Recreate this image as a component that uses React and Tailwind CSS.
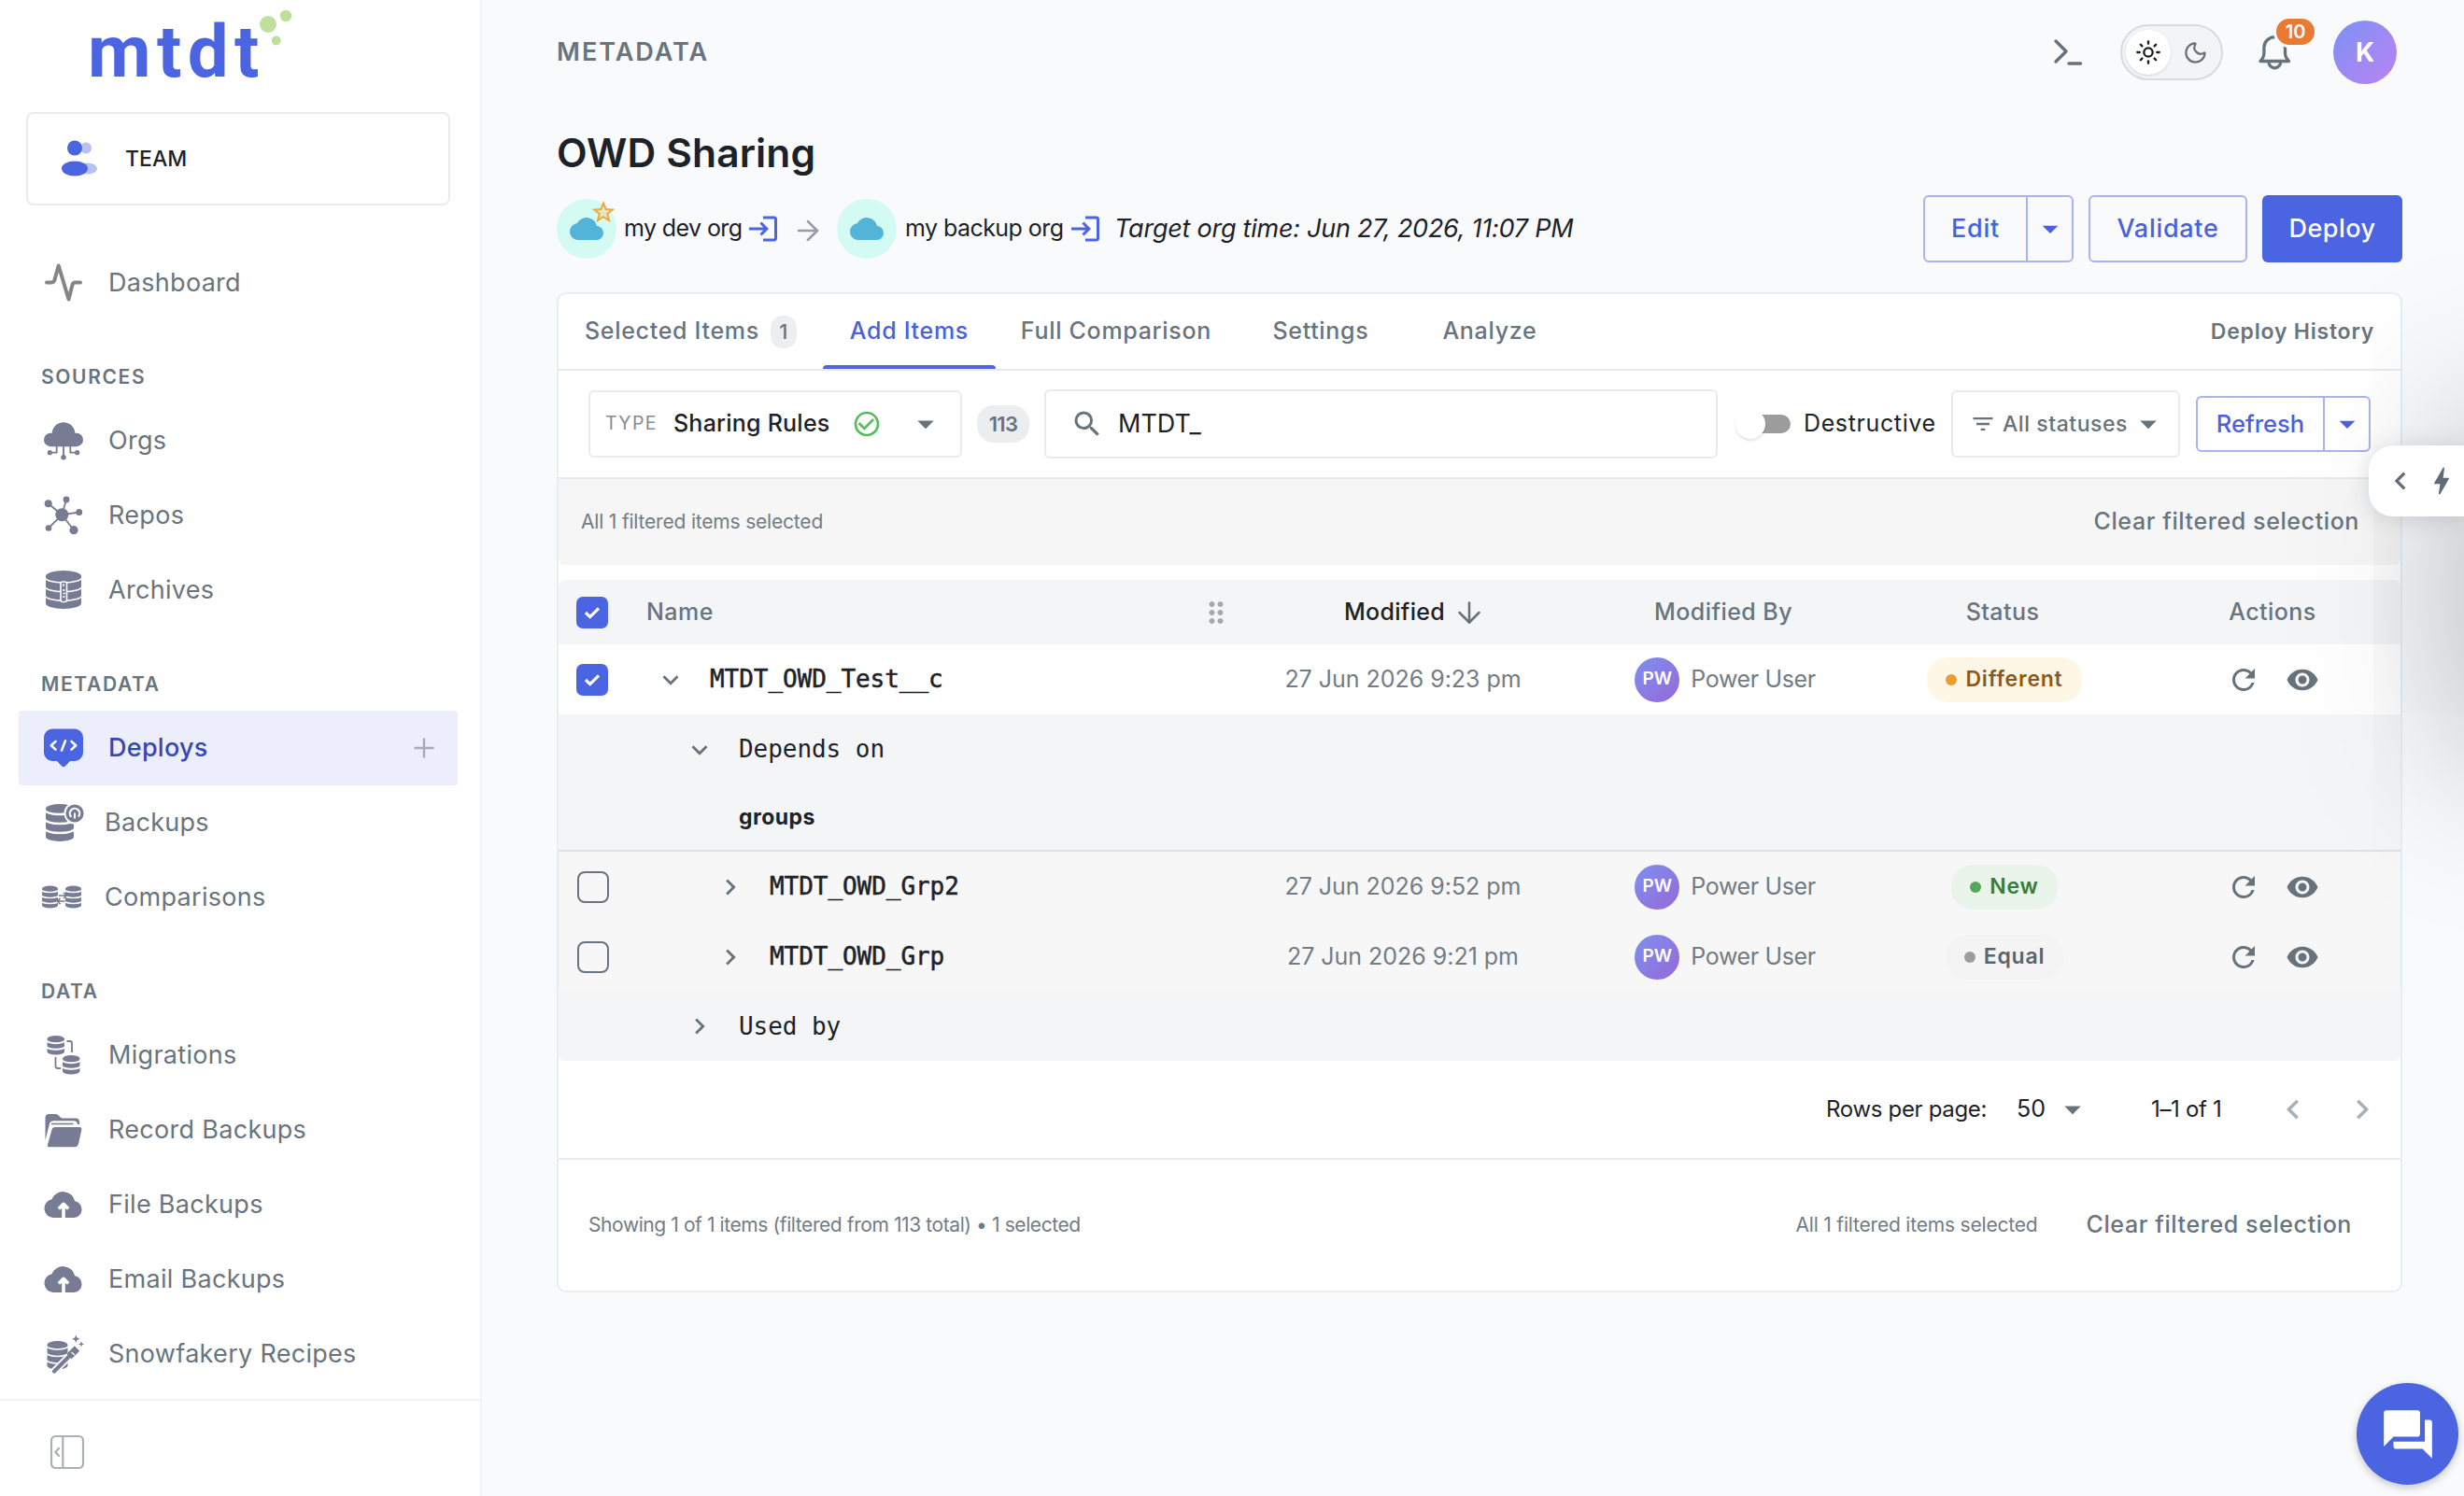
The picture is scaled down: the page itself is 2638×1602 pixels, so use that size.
import { useState } from "react";
import clsx from "clsx";
import { ArrowDown, ArrowRight, Moon, Sun } from "lucide-react";
import {
  MdArrowDropDown, MdBolt, MdCheckCircleOutline, MdChevronLeft, MdChevronRight, MdCloud,
  MdDragIndicator, MdExpandMore, MdFilterList, MdForum, MdLogin, MdRefresh, MdSearch, MdVisibility,
} from "react-icons/md";

const INK = "#777b93";

// stacked-disk cylinder, used by most of the data icons
function Disks({ x, y, w, h, bands = 3, ry = w / 6, gap = 2.2 }) {
  const rx = w / 2;
  const step = (h - ry * 2) / bands;
  return (
    <g>
      <path
        d={`M${x} ${y + ry}a${rx} ${ry} 0 0 1 ${w} 0V${y + h - ry}a${rx} ${ry} 0 0 1 ${-w} 0Z`}
        fill={INK}
      />
      {Array.from({ length: bands }, (_, i) => (
        <path
          key={i}
          d={`M${x - 1} ${y + ry + i * step + 1}a${rx + 1} ${ry} 0 0 0 ${w + 2} 0`}
          fill="none"
          stroke="#fff"
          strokeWidth={gap}
        />
      ))}
    </g>
  );
}

const Glyph = ({ children }) => (
  <svg width="42" height="42" viewBox="0 0 42 42" fill="none" className="shrink-0 overflow-visible">{children}</svg>
);

const DashboardIcon = () => (
  <Glyph>
    <path d="M3 20.500h5c2 0 2.800-.8 3.400-2.600L15.700 2.500 26.500 38.500 30.500 23.100c.5-1.800 1.300-2.600 3.200-2.600H39" stroke="#858585" strokeWidth="4" strokeLinecap="round" strokeLinejoin="round" />
  </Glyph>
);

const OrgsIcon = () => (
  <Glyph>
    <circle cx="21" cy="13.500" r="12.300" fill={INK} />
    <rect x="0" y="12.700" width="42" height="14.500" rx="7.200" fill={INK} />
    <path d="M13.700 27v6.700H6.300M21 27v10M28.300 27v6.700h7.400" stroke={INK} strokeWidth="1.800" />
    <circle cx="6.300" cy="33.700" r="2.600" fill={INK} />
    <circle cx="21" cy="38.700" r="2.700" fill={INK} />
    <circle cx="35.700" cy="33.700" r="2.600" fill={INK} />
  </Glyph>
);

const ReposIcon = () => (
  <Glyph>
    <path d="M19.300 20.300 4.700 8.300M19.300 20.300 24 4M19.300 20.300l18.400-2.800M19.300 20.300 32 36.700M19.300 20.300 5 34.500" stroke={INK} strokeWidth="1.800" />
    <circle cx="19.300" cy="20.300" r="7" fill={INK} />
    <circle cx="4.700" cy="8.300" r="4" fill={INK} />
    <circle cx="24" cy="4" r="3.400" fill={INK} />
    <circle cx="37.700" cy="17.500" r="3.500" fill={INK} />
    <circle cx="32" cy="36.700" r="4.600" fill={INK} />
    <circle cx="5" cy="34.500" r="3.300" fill={INK} />
  </Glyph>
);

const ArchivesIcon = () => (
  <Glyph>
    <Disks x={2} y={0} w={38} h={41} ry={6} gap={1.600} />
    <rect x="18" y="12" width="6.500" height="21.500" rx="2" fill={INK} stroke="#fff" strokeWidth="1.600" />
    <path d="M21 14v3M20 21h2.500M20.500 24.500H23M20 28h2.500" stroke="#fff" strokeWidth="1.400" />
  </Glyph>
);

const DeploysIcon = () => (
  <Glyph>
    <path d="M9 .5h24a9 9 0 0 1 9 9V26a9 9 0 0 1-9 9h-5l-5 5.200a2.800 2.800 0 0 1-4 0L14 35H9a9 9 0 0 1-9-9V9.500a9 9 0 0 1 9-9Z" fill="#4b64e2" />
    <path d="m12.500 14-4.700 4.300 4.700 4.300M29.500 14l4.700 4.300-4.700 4.300M23 13.300l-4 10.200" stroke="#fff" strokeWidth="2.600" strokeLinecap="round" strokeLinejoin="round" />
  </Glyph>
);

const BackupsIcon = () => (
  <Glyph>
    <Disks x={2} y={1} w={30} h={40} ry={5} gap={2.400} />
    <circle cx="33" cy="11" r="11.500" fill="#fff" />
    <circle cx="33" cy="11" r="9.600" fill={INK} />
    <path d="M29.500 14.800a5.200 5.200 0 1 1 7.400-.4" stroke="#fff" strokeWidth="2.200" />
    <path d="M33 10.500v6" stroke="#fff" strokeWidth="2" />
  </Glyph>
);

const ComparisonsIcon = () => (
  <Glyph>
    <Disks x={0} y={8.500} w={17} h={24} ry={3} gap={1.600} />
    <Disks x={25} y={8.500} w={17} h={24} ry={3} gap={1.600} />
    <path d="M18 19h8m-3-3.200 3 3.200-3 3.200M24.500 25h-8m3-3.200-3 3.200 3 3.200" stroke={INK} strokeWidth="1.600" />
  </Glyph>
);

const MigrationsIcon = () => (
  <Glyph>
    <Disks x={3.500} y={0} w={18.500} h={20.500} bands={2} ry={3.600} gap={2} />
    <Disks x={20} y={21} w={18.500} h={20.500} bands={2} ry={3.600} gap={2} />
    <path d="M24.500 6h3.500q2 0 2 2v10M12.500 23v9.500q0 2.500 2.500 2.500h3" stroke={INK} strokeWidth="1.800" />
  </Glyph>
);

const FolderIcon = () => (
  <Glyph>
    <path d="M1.500 32V8a4 4 0 0 1 4-4h7.500c3 0 4 4.500 7 4.500h14a4 4 0 0 1 4 4V15h-2c0-2.500-1.500-3.800-4-3.800H10.500c-3 0-4 1.500-4.700 4Z" fill={INK} />
    <path d="M8 14.500h23.500" stroke={INK} strokeWidth="1.600" />
    <path d="M12 18h26c1.800 0 2.700 1.300 2.300 3l-3.300 15c-.5 2-1.800 3.200-3.800 3.200H5.500c-1.500 0-2-.8-1.500-2.500l4.500-16C9 19 10 18 12 18Z" fill={INK} />
  </Glyph>
);

const UploadIcon = () => (
  <Glyph>
    <path d="M32.500 35H10A10 10 0 0 1 8.500 15.200a13 13 0 0 1 24.700 2A9 9 0 0 1 32.500 35Z" fill={INK} />
    <path d="M21 35.500V22M15.800 25.500l5.200-5.200 5.200 5.200" stroke="#fff" strokeWidth="3.600" strokeLinejoin="round" />
  </Glyph>
);

const WandIcon = () => (
  <Glyph>
    <Disks x={3.500} y={7} w={22} h={30.500} ry={4} gap={1.600} />
    <path d="M11 39.500 36 14.500" stroke="#fff" strokeWidth="8" />
    <path d="M11 39.500 27 23.500" stroke={INK} strokeWidth="4.200" strokeLinecap="round" />
    <path d="M27 23.500 35.500 15" stroke={INK} strokeWidth="7.500" />
    <path d="m29.500 19 3.500 3" stroke="#fff" strokeWidth="1.300" />
    <path d="M34.300.5l1.200 3 3 1.200-3 1.200-1.200 3-1.200-3-3-1.200 3-1.200ZM40 7.300l.8 2.300 2.300.8-2.300.8-.8 2.300-.8-2.300-2.300-.8 2.300-.8Z" fill={INK} />
  </Glyph>
);

const NAV = [
  { items: [{ label: "Dashboard", icon: DashboardIcon }] },
  {
    title: "SOURCES",
    items: [
      { label: "Orgs", icon: OrgsIcon },
      { label: "Repos", icon: ReposIcon },
      { label: "Archives", icon: ArchivesIcon },
    ],
  },
  {
    title: "METADATA",
    items: [
      { label: "Deploys", icon: DeploysIcon, active: true },
      { label: "Backups", icon: BackupsIcon, box: "pl-[27px]", gap: "ml-[23px]" },
      { label: "Comparisons", icon: ComparisonsIcon, box: "pl-[25px]", gap: "ml-[25px]" },
    ],
  },
  {
    title: "DATA",
    items: [
      { label: "Migrations", icon: MigrationsIcon },
      { label: "Record Backups", icon: FolderIcon },
      { label: "File Backups", icon: UploadIcon },
      { label: "Email Backups", icon: UploadIcon },
      { label: "Snowfakery Recipes", icon: WandIcon },
    ],
  },
];

function Logo() {
  return (
    <div className="relative h-[120px] shrink-0 pl-[94px]">
      <span className="block pt-[11px] font-['Roboto'] text-[78px] leading-[90px] font-bold tracking-[0.082em] text-[#4b64e2]">mtdt</span>
      <svg className="absolute top-[8px] left-[276px]" width="40" height="44" viewBox="0 0 40 44" fill="#bfe09a">
        <circle cx="11" cy="18" r="9" />
        <circle cx="30" cy="9" r="6.200" />
        <circle cx="19.700" cy="35.500" r="5" />
      </svg>
    </div>
  );
}

function Sidebar() {
  return (
    <aside className="flex h-full w-[516px] shrink-0 flex-col border-r-2 border-[#f1f3f6] bg-white">
      <Logo />
      <div className="mr-[32px] ml-7 flex h-[100px] shrink-0 items-center rounded-lg border-2 border-[#ebebeb] pl-[36px]">
        <svg width="40" height="40" viewBox="0 0 40 40">
          <circle cx="26" cy="8.500" r="6" fill="#b7c1f4" />
          <ellipse cx="28" cy="30.500" rx="10" ry="6" fill="#b7c1f4" />
          <circle cx="14" cy="8.500" r="8" fill="#4b64e2" />
          <ellipse cx="14" cy="30.500" rx="14" ry="8" fill="#4b64e2" />
        </svg>
        <span className="ml-[28px] text-[23px] font-medium text-[#1d2228]">TEAM</span>
      </div>
      <nav className="mt-[43px] flex-1">
        {NAV.map((group, i) => (
          <div key={i}>
            {group.title && (
              <div className="flex h-[89px] items-center pt-[33px] pl-[44px] text-[21px] font-semibold tracking-[0.078em] text-[#69747e]">{group.title}</div>
            )}
            {group.items.map(({ label, icon: Icon, active, box = "pl-[27px]", gap = "ml-[27px]" }) => (
              <div
                key={label}
                className={clsx("mr-[24px] ml-[20px] flex h-[80px] items-center rounded pr-[22px]", box, active && "bg-[#eceefb]")}
              >
                <Icon />
                <span
                  className={clsx(
                    "flex-1 text-[27px]",
                    gap,
                    active ? "font-medium tracking-[0.01em] text-[#3647b4]" : "tracking-[0.011em] text-[#69747e]",
                  )}
                >
                  {label}
                </span>
                {active && (
                  <svg width="28" height="28" viewBox="0 0 28 28" stroke="#a6abb6" strokeWidth="2.400"><path d="M14 3.500v21M3.500 14h21" /></svg>
                )}
              </div>
            ))}
          </div>
        ))}
      </nav>
      <div className="flex h-[104px] shrink-0 items-center border-t-2 border-[#f0f1f3] pt-[7px] pl-[53px]">
        <svg width="38" height="38" viewBox="0 0 38 38" fill="none" stroke="#a9b0b7" strokeWidth="2.200" strokeLinecap="round">
          <rect x="2" y="2" width="34" height="34" rx="4.500" />
          <path d="M14.300 2v34M10 15l-3.600 4 3.600 4" />
        </svg>
      </div>
    </aside>
  );
}

function TopBar() {
  return (
    <header className="flex h-[112px] shrink-0 items-center pr-[6px]">
      <span className="flex-1 text-[27px] font-semibold tracking-[0.074em] text-[#69747e]">METADATA</span>
      <svg width="34" height="32" viewBox="0 0 34 32" fill="none" stroke="#66727c" strokeWidth="3.400" strokeLinecap="round" strokeLinejoin="round" className="mr-[39px]">
        <path d="m4 4 11 11L4 26M18 28h12.500" />
      </svg>
      <div className="flex h-[60px] w-[110px] items-center rounded-full border-2 border-[#d9dbdf] bg-[#f3f4f6] pl-1">
        <span className="flex size-[48px] items-center justify-center rounded-full bg-white shadow-sm">
          <Sun size={28} strokeWidth={2} className="text-[#1a1c1f]" />
        </span>
        <Moon size={27} strokeWidth={2} className="ml-[13px] text-[#66727c]" />
      </div>
      <div className="relative ml-[36px]">
        <svg width="40" height="40" viewBox="0 0 40 40" fill="none" stroke="#66727c" strokeWidth="3.300" strokeLinejoin="round">
          <path d="M4 29.500h30.500c-3-3-4-5-4-9V15a11.300 11.300 0 0 0-22.600 0v5.500c0 4-1 6-3.900 9Z" />
          <path d="M13 30.500a6.300 6.300 0 0 0 12.600 0" />
        </svg>
        <span className="absolute -top-[19px] left-[18px] flex h-[34px] w-[47px] items-center justify-center rounded-full border-3 border-[#f9fafc] bg-[#e97a32] text-[20px] font-semibold text-white">10</span>
      </div>
      <span className="ml-[42px] flex size-[68px] items-center justify-center rounded-full bg-linear-135 from-[#7a90f2] to-[#b983f4] text-[28px] font-bold text-white">K</span>
    </header>
  );
}

const OrgCloud = ({ starred }) => (
  <span className="relative flex size-[64px] shrink-0 items-center justify-center rounded-full bg-[#d3fbf3]">
    <MdCloud size={36} className="text-[#52b4d6]" />
    {starred && (
      <svg className="absolute top-[2px] left-[38px]" width="24" height="24" viewBox="0 0 24 24" fill="#e3e6c0" stroke="#f0a93e" strokeWidth="2">
        <path d="M12 2.500l2.700 6.600 7 .5-5.400 4.500 1.700 6.900-6-3.800-6 3.800 1.700-6.900-5.400-4.500 7-.5Z" />
      </svg>
    )}
  </span>
);

function SplitButton({ label, className, caret }) {
  return (
    <div className={clsx("flex items-stretch rounded-md border-2 border-[#a9b3f0] font-medium text-[#4b60dd]", className)}>
      <span className="flex flex-1 items-center justify-center">{label}</span>
      <span className={clsx("flex items-center justify-center border-l-2 border-[#a9b3f0]", caret)}>
        <MdArrowDropDown size={40} className="-mx-4" />
      </span>
    </div>
  );
}

function PageHeading() {
  return (
    <>
      <h1 className="flex h-[97px] items-center pt-[6px] text-[42.500px] font-semibold tracking-[0.003em] text-[#1d2228]">OWD Sharing</h1>
      <div className="flex h-[72px] items-center">
        <OrgCloud starred />
        <span className="ml-2 w-[131px] text-[25px] tracking-[-0.024em] whitespace-nowrap text-[#1d2228]">my dev org</span>
        <MdLogin size={36} className="shrink-0 text-[#4b64e2]" />
        <ArrowRight size={34} strokeWidth={1.900} className="mt-[4px] mr-[14px] ml-[13px] shrink-0 text-[#969ca5]" />
        <OrgCloud />
        <span className="ml-[9px] w-[175px] text-[25px] tracking-[-0.022em] whitespace-nowrap text-[#1d2228]">my backup org</span>
        <MdLogin size={36} className="shrink-0 text-[#4b64e2]" />
        <span className="ml-[13px] flex-1 text-[27px] tracking-[-0.009em] text-[#1d2228] italic">Target org time: Jun 27, 2026, 11:07 PM</span>
        <div className="flex gap-4 text-[27px]">
          <SplitButton label="Edit" className="h-[72px] w-[161px] tracking-[0.026em]" caret="w-[49px]" />
          <span className="flex h-[72px] w-[170px] items-center justify-center rounded-md border-2 border-[#a9b3f0] font-medium tracking-[0.026em] text-[#4b60dd]">Validate</span>
          <span className="flex h-[72px] w-[150px] items-center justify-center rounded-md bg-[#4b64e2] font-medium tracking-[0.018em] text-white">Deploy</span>
        </div>
      </div>
    </>
  );
}

const TABS = [
  { label: "Selected Items", count: 1, box: "pl-7 pr-7" },
  { label: "Add Items", active: true, box: "w-[185px] justify-center" },
  { label: "Full Comparison", box: "w-[258px] justify-center" },
  { label: "Settings", box: "w-[180px] justify-center" },
  { label: "Analyze", box: "w-[182px] justify-center" },
];

function Tabs() {
  return (
    <div className="flex h-[82px] border-b-2 border-[#e9eaeb] text-[25px] font-medium tracking-[0.028em] text-[#69747e]">
      {TABS.map(({ label, count, active, box }) => (
        <div key={label} className={clsx("relative flex items-center whitespace-nowrap", box, active && "text-[#4b60dd]")}>
          {label}
          {count && <span className="ml-[12px] flex h-[35px] w-[28px] items-center justify-center rounded-[13px] bg-[#edeef0] text-[22px] tracking-normal">{count}</span>}
          {active && <span className="absolute inset-x-0 bottom-0 h-1 rounded-t bg-[#4b64e2]" />}
        </div>
      ))}
      <span className="ml-auto flex items-center pr-[28px] text-[23px] font-semibold tracking-[0.034em]">Deploy History</span>
    </div>
  );
}

function Filters() {
  const [query, setQuery] = useState("MTDT_");
  return (
    <div className="flex h-[116px] items-center border-b-2 border-[#e9eaeb] pl-[32px] text-[#1d2228]">
      <div className="flex h-[72px] w-[400px] items-center rounded-md border-2 border-[#ebebec] pl-[16px]">
        <span className="w-[73px] text-[19.500px] tracking-[0.07em] text-[#868c92]">TYPE</span>
        <span className="w-[191px] text-[25px] font-medium tracking-[0.009em]">Sharing Rules</span>
        <MdCheckCircleOutline size={32} className="text-[#55bb5c]" />
        <MdArrowDropDown size={42} className="ml-[26px] text-[#66727c]" />
      </div>
      <span className="ml-[16px] flex h-[40px] w-[56px] items-center justify-center rounded-[18px] bg-[#ebedef] text-[22px] font-semibold tracking-[-0.03em] text-[#66727c]">113</span>
      <div className="ml-[16px] flex h-[74px] w-[721px] items-center rounded-md border-2 border-[#ebebec] pl-[26px]">
        <MdSearch size={36} className="text-[#66727c]" />
        <input value={query} onChange={(e) => setQuery(e.target.value)} className="ml-[15px] w-[500px] bg-transparent text-[27px] outline-none" />
      </div>
      <div className="relative ml-[19px] h-[20px] w-[59px] rounded-full">
        <span className="absolute right-0 block h-[20px] w-[52px] rounded-full bg-[#9c9c9c]" />
        <span className="absolute -top-[6px] left-0 block size-[32px] rounded-full bg-white shadow-[0_2px_3px_rgba(0,0,0,0.12)]" />
      </div>
      <span className="ml-[14px] w-[158px] text-[25px] tracking-[0.025em]">Destructive</span>
      <div className="flex h-[72px] w-[245px] items-center rounded-md border-2 border-[#ebebec] pl-[18px] text-[#66727c]">
        <MdFilterList size={28} />
        <span className="ml-[7px] text-[23px] font-medium tracking-[0.024em]">All statuses</span>
        <MdArrowDropDown size={42} className="ml-[1px]" />
      </div>
      <SplitButton label="Refresh" className="ml-[17px] h-[60px] w-[187px] text-[25.500px]" caret="w-[49px]" />
    </div>
  );
}

function Checkbox({ checked }) {
  if (!checked) return <span className="ml-[20px] block size-[34px] rounded-lg border-[2.500px] border-[#69747e]" />;
  return (
    <span className="ml-[19px] flex size-[34px] items-center justify-center rounded-[7px] bg-[#4b64e2]">
      <svg width="18" height="14" viewBox="0 0 18 14" fill="none" stroke="#fff" strokeWidth="3.200"><path d="m2 7 4.700 4.600L16 2.300" /></svg>
    </span>
  );
}

const CHIPS = {
  Different: { box: "w-[166px] bg-[#fef7e6] text-[#8a5a1c]", dot: "bg-[#ee9b33]" },
  New: { box: "w-[114px] bg-[#e9f5ea] text-[#377d3b]", dot: "bg-[#55a75a]" },
  Equal: { box: "w-[126px] bg-[#f4f4f4] text-[#5f6468]", dot: "bg-[#9d9d9d]" },
};

const StatusChip = ({ status }) => (
  <span className={clsx("flex h-[48px] items-center justify-center gap-[9px] rounded-[22px] text-[23px] font-semibold tracking-[0.034em]", CHIPS[status].box)}>
    <span className={clsx("size-[12px] rounded-full", CHIPS[status].dot)} />
    {status}
  </span>
);

const GRID = "grid grid-cols-[72px_662px_340px_346px_256px_296px] items-center";
const MONO = "font-['DejaVu_Sans_Mono'] text-[26px] tracking-[-0.002em] text-[#1d2228]";

function ItemRow({ checked, open, name, indent, modified, status, bg }) {
  const Chevron = open ? MdExpandMore : MdChevronRight;
  return (
    <div className={clsx(GRID, "h-[75px]", bg)}>
      <Checkbox checked={checked} />
      <div className={clsx("flex items-center", indent)}>
        <Chevron size={34} className="text-[#66727c]" />
        <span className={clsx(MONO, "ml-[25px] [-webkit-text-stroke:0.5px_#1d2228]")}>{name}</span>
      </div>
      <span className="text-center text-[25px] tracking-[-0.001em] text-[#727c86]">{modified}</span>
      <div className="flex items-center justify-center gap-3 pl-1">
        <span className="flex size-[48px] items-center justify-center rounded-full bg-linear-135 from-[#7b90f0] to-[#9468d8] text-[19px] font-semibold text-white">PW</span>
        <span className="text-[25px] tracking-[-0.015em] text-[#727c86]">Power User</span>
      </div>
      <div className="flex justify-center"><StatusChip status={status} /></div>
      <div className="flex items-center justify-center gap-[27px] pl-[22px] text-[#66727c]">
        <MdRefresh size={36} />
        <MdVisibility size={36} />
      </div>
    </div>
  );
}

function ItemsTable() {
  return (
    <div className="mt-4 text-[#69747e]">
      <div className={clsx(GRID, "h-[69px] rounded-t-lg bg-[#f4f5f7] text-[25px] font-medium tracking-[0.018em]")}>
        <Checkbox checked />
        <div className="flex items-center justify-between pr-[12px] pl-[22px]">
          Name
          <MdDragIndicator size={36} className="text-[#a8a8a8]" />
        </div>
        <div className="flex items-center justify-center gap-[8px] pl-[26px] tracking-[0.012em] text-[#1d2228]">
          Modified
          <ArrowDown size={36} strokeWidth={1.700} className="text-[#66727c]" />
        </div>
        <span className="text-center">Modified By</span>
        <span className="pr-1 text-center">Status</span>
        <span className="pl-[22px] text-center">Actions</span>
      </div>
      <ItemRow checked open name="MTDT_OWD_Test__c" indent="pl-[31px]" modified="27 Jun 2026 9:23 pm" status="Different" bg="bg-white" />
      <div className="flex h-[75px] items-center bg-[#f4f5f7] pl-[134px]">
        <MdExpandMore size={34} className="text-[#66727c]" />
        <span className={clsx(MONO, "ml-[25px]")}>Depends on</span>
      </div>
      <div className="flex h-[72px] items-center border-b-2 border-[#dfe1e4] bg-[#f4f5f7] pl-[193px] text-[23px] font-bold tracking-[0.02em] text-[#1d2228]">groups</div>
      <ItemRow name="MTDT_OWD_Grp2" indent="pl-[95px]" modified="27 Jun 2026 9:52 pm" status="New" bg="bg-[#f7f7f7]" />
      <ItemRow name="MTDT_OWD_Grp" indent="pl-[95px]" modified="27 Jun 2026 9:21 pm" status="Equal" bg="bg-[#f7f7f7]" />
      <div className="flex h-[74px] items-center rounded-b-md bg-[#f4f5f7] pl-[134px]">
        <MdChevronRight size={34} className="text-[#66727c]" />
        <span className={clsx(MONO, "ml-[25px]")}>Used by</span>
      </div>
    </div>
  );
}

function DeployCard() {
  return (
    <section className="mt-8 w-[1976px] rounded-[10px] border-2 border-[#ebecee] bg-white">
      <Tabs />
      <Filters />
      <div className="flex h-[92px] items-center justify-between rounded-b-md bg-[#f6f6f6] pr-[44px] pl-[24px] text-[#69747e]">
        <span className="text-[21px] tracking-[-0.009em] text-[#727c86]">All 1 filtered items selected</span>
        <span className="text-[25px] font-medium tracking-[0.024em]">Clear filtered selection</span>
      </div>
      <ItemsTable />
      <div className="flex h-[106px] items-center border-b-2 border-[#e9eaeb] text-[24px] text-[#1d2228]">
        <span className="ml-auto tracking-[-0.014em]">Rows per page:</span>
        <span className="ml-[32px] text-[25px]">50</span>
        <MdArrowDropDown size={42} className="ml-[8px] text-[#66727c]" />
        <span className="ml-[63px] w-[80px] tracking-[-0.014em] whitespace-nowrap">1–1 of 1</span>
        <MdChevronLeft size={42} className="ml-[51px] text-[#a7afb7]" />
        <MdChevronRight size={42} className="mr-[20px] ml-[32px] text-[#a7afb7]" />
      </div>
      <div className="flex h-[140px] items-center pr-[52px] pl-[32px] text-[21px] tracking-[-0.0195em] text-[#727c86]">
        <span>Showing 1 of 1 items (filtered from 113 total) • 1 selected</span>
        <span className="ml-auto tracking-[-0.009em]">All 1 filtered items selected</span>
        <span className="ml-[52px] text-[25px] font-medium tracking-[0.024em] text-[#69747e]">Clear filtered selection</span>
      </div>
    </section>
  );
}

export default function App() {
  return (
    <div className="relative flex h-[1602px] w-[2638px] overflow-hidden bg-[#f9fafc] font-['Inter',sans-serif]">
      <Sidebar />
      <main className="flex flex-1 flex-col pr-[66px] pl-[80px]">
        <TopBar />
        <PageHeading />
        <DeployCard />
      </main>
      {/* closed quick-actions drawer: only its shadow and the pull tab are visible */}
      <div className="absolute top-[450px] left-[2642px] h-[365px] w-[300px] shadow-[0_0_180px_0_rgba(0,0,0,0.34)]" />
      <div className="absolute top-[477px] right-0 flex h-[76px] w-[102px] items-center rounded-l-[26px] bg-white pl-[15px] text-[#5f6c77] shadow-[0_2px_24px_rgba(40,50,70,0.16)]">
        <MdChevronLeft size={38} />
        <MdBolt size={38} className="ml-[6px]" />
      </div>
      <div className="absolute top-[1481px] left-[2523px] flex size-[109px] items-center justify-center rounded-full bg-[#4b64e2] text-white shadow-[0_3px_8px_rgba(0,0,0,0.22)]">
        <MdForum size={62} />
      </div>
    </div>
  );
}
